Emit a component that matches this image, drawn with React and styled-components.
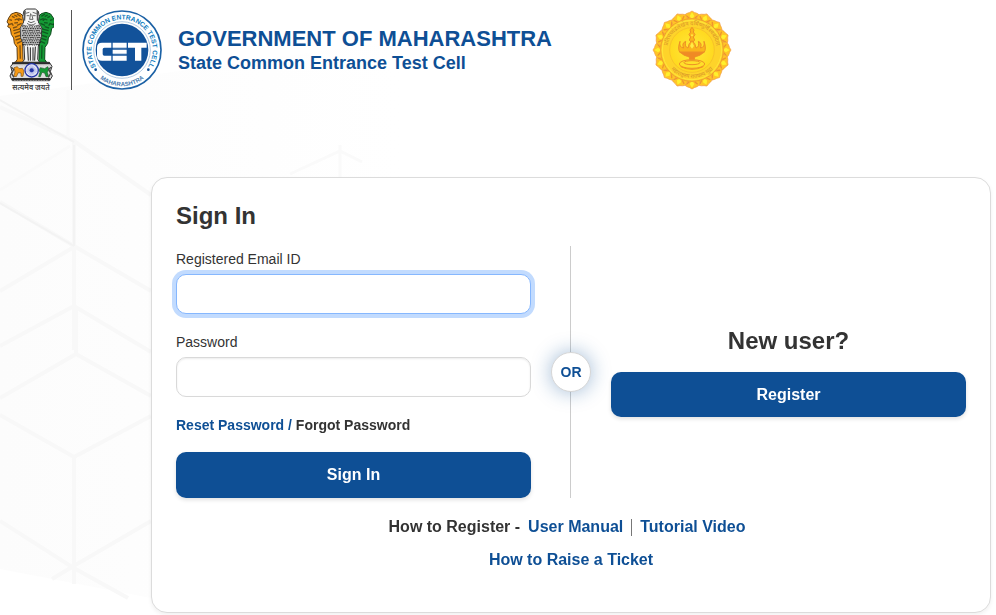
import React from "react";
import styled, { createGlobalStyle } from "styled-components";

const BLUE = "#0e4f95";
const INK = "#333333";

const GlobalStyle = createGlobalStyle`
  *, *::before, *::after { box-sizing: border-box; }
  body {
    margin: 0;
    background: #fff;
    color: ${INK};
    font-family: "Liberation Sans", Arial, Helvetica, sans-serif;
    font-size: 14px;
  }
  h1, h2, p { margin: 0; }
`;

const Page = styled.div`
  position: relative;
  display: flow-root;
  min-height: 100vh;
  overflow: hidden;
`;

const Backdrop = styled.svg`
  position: absolute;
  left: 0;
  top: 0;
  z-index: -1;
`;

const Header = styled.header`
  display: grid;
  grid-template-columns: 2fr 1fr;
  align-items: center;
  height: 100px;
  padding-left: 6px;
`;

const Brand = styled.div`
  display: flex;
  align-items: center;
`;

const BrandRule = styled.span`
  width: 1px;
  height: 80px;
  margin: 0 10px 0 17px;
  background: #555;
`;

const BrandText = styled.div`
  margin-left: 16px;
  color: ${BLUE};
  font-weight: 700;
`;

const BrandTitle = styled.h1`
  font-size: 22px;
  line-height: 26px;
  white-space: nowrap;
`;

const BrandSubtitle = styled.p`
  font-size: 18px;
  line-height: 22px;
  white-space: nowrap;
`;

const SealCell = styled.div`
  display: flex;
  margin-left: -14px;
`;

const Card = styled.main`
  max-width: 840px;
  margin: 77px 5px 2px auto;
  padding: 24px 24px 40px;
  background: #fff;
  border: 1px solid #dcdcdc;
  border-radius: 16px;
  box-shadow: 0 2px 4px rgba(0, 0, 0, 0.06);
`;

const Heading = styled.h2`
  font-size: 24px;
  line-height: 28px;
  font-weight: 700;
  margin-bottom: ${(p) => (p.$roomy ? "17px" : "16px")};
`;

const Columns = styled.div`
  display: grid;
  grid-template-columns: 1fr 80px 1fr;
`;

const SignInForm = styled.form`
  display: flex;
  flex-direction: column;
  gap: 15px;
`;

const Field = styled.div`
  display: flex;
  flex-direction: column;
  gap: 2px;
`;

const Label = styled.label`
  line-height: 26px;
`;

const Input = styled.input`
  width: 100%;
  height: 40px;
  padding: 6px 12px;
  border: 1px solid #d9d9d9;
  border-radius: 10px;
  background: #fff;
  box-shadow: inset 0 1px 2px rgba(0, 0, 0, 0.08);
  color: ${INK};
  font: inherit;
  outline: none;

  &:focus {
    border-color: #86b7fe;
    box-shadow: 0 0 0 4px #c2dbfe;
  }
`;

const Link = styled.a`
  color: ${(p) => (p.$dark ? INK : BLUE)};
  font-weight: 700;
  text-decoration: none;
`;

const Recovery = styled.p`
  padding-top: 1px;
  color: ${BLUE};
  font-weight: 700;
  line-height: 24px;
`;

const Button = styled.button`
  width: 100%;
  height: ${(p) => (p.$tall ? "46px" : "45px")};
  border: 0;
  border-radius: 10px;
  background: ${BLUE};
  box-shadow: 0 2px 4px rgba(0, 0, 0, 0.12);
  color: #fff;
  font: inherit;
  font-size: 16px;
  font-weight: 700;
  cursor: pointer;
`;

const Divider = styled.div`
  display: grid;
  place-items: center;
  background: linear-gradient(#cccccc, #cccccc) 39px 0 / 1px 100% no-repeat;
`;

const OrBadge = styled.span`
  display: grid;
  place-items: center;
  width: 40px;
  height: 40px;
  border: 1px solid #d6d6d6;
  border-radius: 50%;
  background: #fff;
  box-shadow: 0 0 20px rgba(14, 79, 149, 0.4);
  color: ${BLUE};
  font-weight: 700;
`;

const RegisterPane = styled.section`
  display: flex;
  flex-direction: column;
  justify-content: center;
  text-align: center;
`;

const Help = styled.div`
  display: flex;
  flex-direction: column;
  align-items: center;
  gap: 9px;
  margin-top: 17px;
  font-size: 16px;
  font-weight: 700;
  line-height: 24px;
`;

const HelpRow = styled.div`
  display: flex;
  align-items: center;
  gap: 8px;
  padding-right: 8px;
`;

const HelpRule = styled.span`
  width: 1px;
  height: 17px;
  background: #777;
`;

function CubePattern() {
  return (
    <Backdrop width="400" height="615" viewBox="0 0 400 615" fill="none" aria-hidden="true">
      <defs>
        <linearGradient id="haze" x1="0" y1="0" x2="1" y2="0">
          <stop offset="0" stopColor="#fcfcfc" />
          <stop offset="1" stopColor="#ffffff" />
        </linearGradient>
      </defs>
      <path d="M0 96 L400 40 V615 L151 598 L0 569Z" fill="url(#haze)" />
      <g stroke="#f8f8f8" strokeWidth="4">
        <path d="M0 107L74 141L151 195M74 141V350M0 202L74 246L151 291M0 291L74 247" />
        <path d="M0 346L74 306L151 352M76 306V354L0 398M76 354L151 396M0 415L74 457L151 416" />
        <path d="M74 457V584M0 521L72 567L151 521M72 567L52 579M72 567L128 598" />
        <path d="M68 90V140M0 190L70 146M290 174L340 151L362 162M340 145V178" strokeWidth="3" stroke="#fafafa" />
      </g>
      <path d="M0 100L74 142M74 145V246M0 203L74 246" stroke="#f3f3f3" strokeWidth="2" />
    </Backdrop>
  );
}

function Lion({ side }) {
  const colour = side === "left" ? "#f59a16" : "#159a35";
  const shade = side === "left" ? "#5e3d12" : "#0d4a1c";
  return (
    <g transform={side === "right" ? "translate(186 0) scale(-1 1)" : undefined}>
      <path
        d="M34 42L48 37L62 41L70 49L74 65L71 82L76 100L74 120L68 132L69 178L76 187L46 187L52 178L51 142L43 130L41 114L34 103L31 85L23 80L26 72L21 66L26 54Z"
        fill={colour}
        stroke={shade}
        strokeWidth="3"
        strokeLinejoin="round"
      />
      <path
        d="M28 59L36 61M27 74L36 71L40 77M36 49L44 53M43 45L52 50M51 42L62 49M44 60L51 57L58 62M55 55L66 60M43 69L54 68M51 76L65 70M39 84L52 80M40 92L55 88L69 82M42 101L59 95L72 93M45 111L70 103M47 120L72 112M51 130L68 122M60 136L61 176"
        stroke={shade}
        strokeWidth="4"
        opacity="0.8"
        fill="none"
      />
    </g>
  );
}

function StateEmblem() {
  const spokes = Array.from({ length: 12 }, (_, i) => i * 15);
  const curls = [];
  for (let row = 0; row < 9; row += 1) {
    for (let col = 0; col < 8; col += 1) {
      curls.push([66 + col * 7 + (row % 2) * 3, 77 + row * 7]);
    }
  }
  return (
    <svg width="48" height="84" viewBox="18 24 144 252" role="img" aria-label="State Emblem of India">
      <Lion side="left" />
      <Lion side="right" />
      <path
        d="M72 32L80 27L106 27L115 34L118 50L115 66L125 84L124 112L115 138L113 178L119 187H67L74 178L72 138L62 112L61 84L71 66L68 50Z"
        fill="#f6f6f6"
        stroke="#353535"
        strokeWidth="3"
      />
      <path d="M69 72L83 80H103L117 72L124 84L122 112L114 136H72L63 112L62 84Z" fill="#b9b9b9" />
      <g fill="none" stroke="#1f1f1f" strokeWidth="3">
        {curls.map(([x, y]) => (
          <path key={`${x}-${y}`} d={`M${x} ${y}q3 4 5 0`} />
        ))}
        <path d="M77 40L88 37M98 37L110 41M80 47H88M98 47H107M92 40L89 58H99L95 43M84 64L93 68L104 64M81 70Q94 80 107 70" strokeWidth="2" />
        <path d="M83 140L85 182M91 142V182M99 142V182M106 140L104 182" />
      </g>
      <path d="M75 32L73 62M112 33L113 62" stroke="#555" strokeWidth="5" />
      <path d="M32 199L42 187H148L156 199L151 215L157 228L149 242H37L30 228L36 214Z" fill="#dedede" stroke="#333" strokeWidth="3" />
      <path d="M36 190H150M36 237H150" stroke="#2c2c2c" strokeWidth="6" />
      <path d="M40 195H149M42 242H146" stroke="#bbb" strokeWidth="2" strokeDasharray="5 3" />
      <path d="M42 203L52 200L57 206L67 205L72 213L69 229H63V219L55 218L49 230L41 229L45 216Z" fill="#f59a16" stroke="#7b521a" strokeWidth="2" />
      <path d="M117 211L121 203L134 206L143 200L147 208L142 217L146 230H138L134 219L126 217L121 230H116L120 217Z" fill="#159a35" stroke="#265830" strokeWidth="2" />
      <path d="M34 202L41 208L35 221L42 232M153 202L146 208L152 220L145 232" fill="none" stroke="#444" strokeWidth="4" />
      <circle cx="95" cy="211" r="20" fill="#fff" stroke="#2334a6" strokeWidth="4" />
      {spokes.map((a) => (
        <path key={a} d="M77 211H113" stroke="#4c5cc4" strokeWidth="1" transform={`rotate(${a} 95 211)`} />
      ))}
      <circle cx="95" cy="211" r="6" fill="#2334a6" />
      <text x="93" y="270" textAnchor="middle" fontFamily="Noto Sans, sans-serif" fontSize="22" fontWeight="600" fill="#444">
        सत्यमेव जयते
      </text>
    </svg>
  );
}

function CetLogo() {
  return (
    <svg width="80" height="80" viewBox="18 18 240 240" role="img" aria-label="State CET Cell Maharashtra">
      <defs>
        <path id="cet-top" d="M78 208A92 92 0 1 1 198 208" />
        <path id="cet-bottom" d="M49 199A107 107 0 0 0 227 199" />
      </defs>
      <circle cx="138" cy="138" r="117" fill="#fff" stroke="#1b61a5" strokeWidth="5" />
      <circle cx="138" cy="138" r="85" fill="none" stroke="#8fb1d2" strokeWidth="2" />
      <circle cx="138" cy="138" r="79" fill="#12529a" />
      <g fontFamily="Liberation Sans, sans-serif" fontWeight="700" textAnchor="middle">
        <text fontSize="20" fill="#0f7cc0">
          <textPath href="#cet-top" startOffset="50%">STATE COMMON ENTRANCE TEST CELL</textPath>
        </text>
        <text fontSize="18" fill="#4779ad">
          <textPath href="#cet-bottom" startOffset="50%">MAHARASHTRA</textPath>
        </text>
      </g>
      <circle cx="59" cy="197" r="4" fill="#12529a" />
      <circle cx="217" cy="197" r="4" fill="#12529a" />
      <g fill="#fff">
        <path d="M106 116H78Q63 116 63 131V155Q63 170 78 170H106V155H85Q80 155 80 150V136Q80 131 85 131H106Z" />
        <path d="M110 116H152V131H110ZM110 137H152V149H110ZM110 155H152V170H110Z" />
        <path d="M156 116H212V131H196V170H177V131H156Z" />
      </g>
      <path d="M111 134H152M111 152H152" stroke="#9db9d7" strokeWidth="1" />
    </svg>
  );
}

function MaharashtraSeal() {
  const petals = Array.from({ length: 16 }, (_, i) => i * 22.5);
  return (
    <svg width="80" height="80" viewBox="-120 -120 240 240" role="img" aria-label="Seal of Maharashtra">
      <defs>
        <radialGradient id="gold">
          <stop offset="0" stopColor="#ffe93a" />
          <stop offset="1" stopColor="#ffd91f" />
        </radialGradient>
        <path id="seal-ring" d="M-52 52A74 74 0 1 1 52 52" />
        <path id="seal-base" d="M-66 54A86 86 0 0 0 66 54" />
      </defs>
      {petals.map((a) => (
        <g key={a} transform={`rotate(${a})`}>
          <path d="M-23 -90Q-27 -105 -15 -110Q-7 -112 0 -117Q7 -112 15 -110Q27 -105 23 -90Z" fill="#ffc526" stroke="#f09a4a" strokeWidth="2" />
          <path d="M0 -113L-7 -102L0 -92L7 -102Z" fill="#fff02e" />
          <path d="M-17 -103L-8 -95M17 -103L8 -95" stroke="#ee9430" strokeWidth="4" />
        </g>
      ))}
      <circle r="94" fill="#fed32a" stroke="#f0a02c" strokeWidth="3" />
      <circle r="89" fill="none" stroke="#ffe73a" strokeWidth="3" />
      <circle r="67" fill="url(#gold)" stroke="#f3b828" strokeWidth="2" />
      <g fontFamily="Noto Sans, sans-serif" fontSize="17" fill="#d9952a" textAnchor="middle">
        <text>
          <textPath href="#seal-ring" startOffset="50%">प्रतिपच्चंद्रलेखेव वर्धिष्णुर्विश्ववंदिता</textPath>
        </text>
        <text>
          <textPath href="#seal-base" startOffset="50%">महाराष्ट्रस्य राज्यस्य मुद्रा</textPath>
        </text>
      </g>
      <g fill="#fbb41c" stroke="#ee8f26" strokeWidth="3" strokeLinejoin="round">
        <path d="M0 -68L6 -60L4 -54L9 -46L4 -39L8 -30L0 -20L-8 -30L-4 -39L-9 -46L-4 -54L-6 -60Z" />
        <path d="M-36 -26Q-40 -8 -25 -6Q-32 -20 -19 -26Q-23 -9 -12 -6Q-11 -20 0 -28Q11 -20 12 -6Q23 -9 19 -26Q32 -20 25 -6Q40 -8 36 -26Q44 -3 36 8H-36Q-44 -3 -36 -26Z" />
        <path d="M-36 6H36Q24 19 9 20L6 30H-6L-9 20Q-24 19 -36 6Z" fill="#f08a24" />
        <ellipse cy="42" rx="38" ry="13" fill="#ffe02a" />
        <ellipse cy="38" rx="24" ry="6" fill="none" />
        <path d="M-34 50Q0 66 34 50" fill="none" />
      </g>
      <path d="M0 -24L-6 -12L0 -4L6 -12Z" fill="#ffec47" />
      <circle cy="-44" r="3" fill="#ffec47" />
    </svg>
  );
}

export default function App() {
  return (
    <Page>
      <GlobalStyle />
      <CubePattern />
      <Header>
        <Brand>
          <StateEmblem />
          <BrandRule />
          <CetLogo />
          <BrandText>
            <BrandTitle>GOVERNMENT OF MAHARASHTRA</BrandTitle>
            <BrandSubtitle>State Common Entrance Test Cell</BrandSubtitle>
          </BrandText>
        </Brand>
        <SealCell>
          <MaharashtraSeal />
        </SealCell>
      </Header>
      <Card>
        <Heading>Sign In</Heading>
        <Columns>
          <SignInForm onSubmit={(e) => e.preventDefault()}>
            <Field>
              <Label htmlFor="email">Registered Email ID</Label>
              <Input id="email" type="email" autoComplete="username" autoFocus />
            </Field>
            <Field>
              <Label htmlFor="password">Password</Label>
              <Input id="password" type="password" autoComplete="current-password" />
            </Field>
            <Recovery>
              <Link href="#reset">Reset Password</Link> / <Link href="#forgot" $dark>Forgot Password</Link>
            </Recovery>
            <Button type="submit" $tall>Sign In</Button>
          </SignInForm>
          <Divider>
            <OrBadge>OR</OrBadge>
          </Divider>
          <RegisterPane>
            <Heading $roomy>New user?</Heading>
            <Button type="button">Register</Button>
          </RegisterPane>
        </Columns>
        <Help>
          <HelpRow>
            <span>How to Register -</span>
            <Link href="#manual">User Manual</Link>
            <HelpRule />
            <Link href="#video">Tutorial Video</Link>
          </HelpRow>
          <Link href="#ticket">How to Raise a Ticket</Link>
        </Help>
      </Card>
    </Page>
  );
}
